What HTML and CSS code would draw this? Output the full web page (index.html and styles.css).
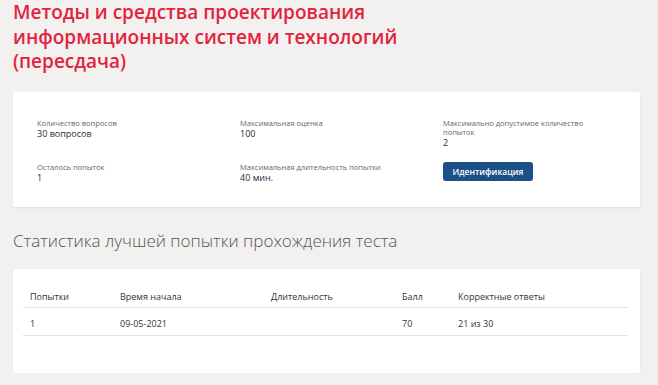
FILE: index.html
```html
<!DOCTYPE html>
<html lang="ru">
<head>
  <meta charset="UTF-8">
  <meta name="viewport" content="width=device-width, initial-scale=1.0">
  <title>Тест</title>
  <link rel="stylesheet" href="styles.css">
</head>
<body>
  <div class="page">
    <h1 class="test-title">Методы и средства проектирования информационных систем и технологий (пересдача)</h1>

    <div class="card info-card">
      <div class="info-item">
        <div class="info-label">Количество вопросов</div>
        <div class="info-value">30 вопросов</div>
      </div>
      <div class="info-item">
        <div class="info-label">Максимальная оценка</div>
        <div class="info-value">100</div>
      </div>
      <div class="info-item">
        <div class="info-label">Максимально допустимое количество попыток</div>
        <div class="info-value">2</div>
      </div>
      <div class="info-item">
        <div class="info-label">Осталось попыток</div>
        <div class="info-value">1</div>
      </div>
      <div class="info-item">
        <div class="info-label">Максимальная длительность попытки</div>
        <div class="info-value">40 мин.</div>
      </div>
      <div class="info-item">
        <a href="javascript:;" class="btn-ident">Идентификация</a>
      </div>
    </div>

    <h2 class="section-title">Статистика лучшей попытки прохождения теста</h2>

    <div class="card stats-card">
      <table class="stats">
        <thead>
          <tr>
            <th class="col-try">Попытки</th>
            <th class="col-start">Время начала</th>
            <th class="col-dur">Длительность</th>
            <th class="col-score">Балл</th>
            <th>Корректные ответы</th>
          </tr>
        </thead>
        <tbody>
          <tr>
            <td>1</td>
            <td>09-05-2021</td>
            <td></td>
            <td>70</td>
            <td>21 из 30</td>
          </tr>
        </tbody>
      </table>
    </div>
  </div>
</body>
</html>
```

FILE: styles.css
```css
body {
  margin: 0;
  background: #f2f1f0;
  font-family: "Open Sans", "Liberation Sans", sans-serif;
  color: #333;
}
a {
  text-decoration: none;
}
.page {
  padding: 0 18px 0 13px;
}
.test-title {
  margin: 0;
  max-width: 410px;
  font-size: 19px;
  line-height: 24.5px;
  font-weight: 600;
  color: #e3233d;
}
.card {
  background: #fff;
  border-radius: 2px;
  box-shadow: 0 1px 2px rgba(0, 0, 0, 0.08);
}
.info-card {
  margin-top: 18px;
  height: 115px;
  box-sizing: border-box;
  padding: 27px 24px 0;
  display: grid;
  grid-template-columns: 203px 203px 1fr;
  grid-template-rows: 44px auto;
}
.info-label {
  max-width: 160px;
  font-size: 7.5px;
  line-height: 9px;
  color: #666;
}
.info-value {
  font-size: 9px;
  line-height: 11px;
  font-weight: 500;
  color: #1f2a3a;
}
.info-item .btn-ident {
  display: block;
  margin-top: -1px;
  width: 90px;
  height: 19px;
  line-height: 19px;
  text-align: center;
  border-radius: 3px;
  background: #1c5087;
  color: #fff;
  font-size: 8.5px;
  font-weight: 600;
}
.section-title {
  margin: 22px 0 0;
  font-size: 17px;
  line-height: 24px;
  font-weight: 300;
  color: #555;
}
.stats-card {
  margin-top: 16px;
  height: 104px;
  box-sizing: border-box;
  padding: 21px 12px 0 10px;
}
.stats {
  width: 100%;
  border-collapse: collapse;
  font-size: 9px;
  color: #333;
}
.stats th, .stats td {
  text-align: left;
  font-weight: 400;
  padding: 0 7px;
  height: 14px;
}
.stats th {
  padding-bottom: 3px;
  border-bottom: 1px solid #e2e2e2;
}
.stats td {
  padding-top: 9px;
  padding-bottom: 4px;
  border-bottom: 1px solid #e2e2e2;
}
.col-try { width: 76px; }
.col-start { width: 137px; }
.col-dur { width: 117px; }
.col-score { width: 42px; }
```
